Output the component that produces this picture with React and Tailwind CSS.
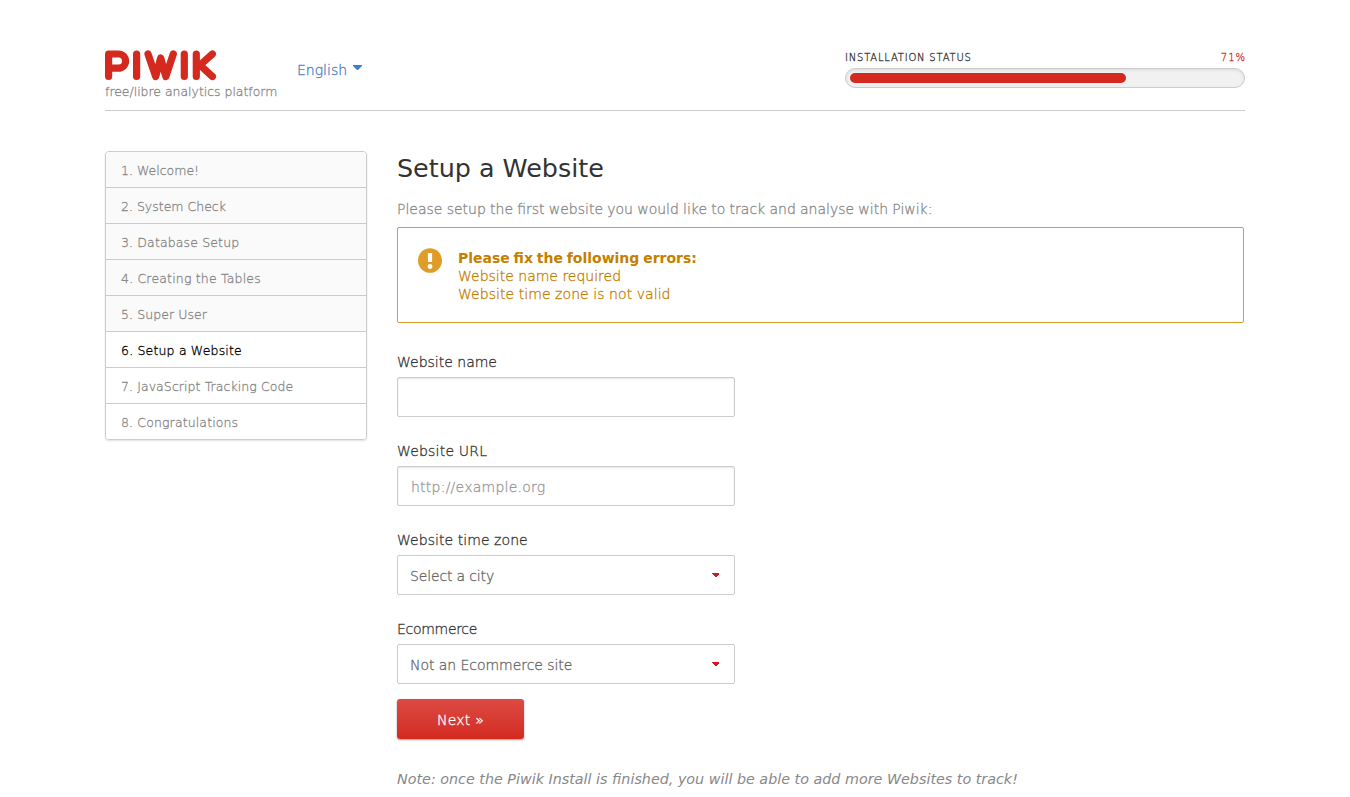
import React from "react";

const steps = [
  ["1. Welcome!", "tracking-normal"],
  ["2. System Check", "tracking-normal"],
  ["3. Database Setup", "tracking-[0.14px]"],
  ["4. Creating the Tables", "tracking-[0.18px]"],
  ["5. Super User", "tracking-[0.08px]"],
  ["6. Setup a Website", "tracking-[0.18px]"],
  ["7. JavaScript Tracking Code", "tracking-[0.08px]"],
  ["8. Congratulations", "tracking-[0.13px]"],
];

function stepClass(i) {
  if (i < 5) return "bg-[#fafafa] text-[#888]";
  if (i === 5) return "bg-white text-black";
  return "bg-white text-[#888]";
}

function Logo() {
  return (
    <svg
      className="block"
      width="112"
      height="31"
      viewBox="0 0 112 31"
      fill="none"
      stroke="#d4291f"
      strokeWidth="7.2"
      strokeLinecap="round"
      strokeLinejoin="round"
    >
      <path d="M3.6 26.5V4H13.5a7.1 7.1 0 0 1 0 14.2H4" />
      <path d="M31.6 4V26.5" />
      <path d="M43 4L50.7 26.5L55.7 8L60.8 26.5L68.3 4" />
      <path d="M79.3 4V26.5" />
      <path d="M91.3 4V26.5M107.4 4L95 15.2L107.4 26.5" />
    </svg>
  );
}

function Field({ label, tracking, children }) {
  return (
    <div className="mb-[25px]">
      <label className={"mb-[6px] block h-[18px] text-sm leading-[18px] text-[#333] " + tracking}>{label}</label>
      {children}
    </div>
  );
}

function Select({ value, tracking }) {
  return (
    <button className="flex h-10 w-[338px] items-center justify-between rounded-[2px] border border-[#ccc] bg-white pr-[15px] pl-3 text-sm text-[#666]">
      <span className={"pt-px " + tracking}>{value}</span>
      <svg className="mb-px block" width="7" height="4" viewBox="0 0 7 4" shapeRendering="crispEdges">
        <path d="M0 0H7V1L4 4H3L0 1Z" fill="#c91b20" />
      </svg>
    </button>
  );
}

export default function App() {
  return (
    <div className="h-[797px] overflow-hidden bg-white font-['DejaVu_Sans',sans-serif] font-extralight [-webkit-text-stroke-width:0.3px]">
      <div className="mx-auto w-[1140px]">
        <header className="flex h-[111px] items-start border-b border-[#ccc] pt-[50px]">
          <div className="w-[192px]">
            <Logo />
            <p className="mt-[1px] text-[12.45px] leading-[19px] whitespace-nowrap text-[#888]">free/libre analytics platform</p>
          </div>
          <div className="flex pt-[11px] text-sm leading-[18px] text-[#3f80c6]">
            English
            <svg className="mt-1 ml-[6px] block" width="9" height="5" viewBox="0 0 9 5">
              <path d="M0 0H9V1L5 5H4L0 1Z" fill="#3f80c6" />
            </svg>
          </div>
          <div className="ml-auto w-[400px]">
            <div className="flex h-[15px] justify-between text-[10px] leading-[15px] uppercase">
              <span className="tracking-[0.8px] text-[#333]">Installation status</span>
              <span className="-mr-px tracking-[1px] text-[#d4291f]">71%</span>
            </div>
            <div className="mt-[3px] h-5 rounded-[10px] border border-[#ccc] bg-[#f1f1f1] p-1 shadow-[inset_0_1px_3px_rgba(0,0,0,0.1)]">
              <div className="h-[10px] w-[276px] rounded-[5px] bg-[#d4291f]" />
            </div>
          </div>
        </header>

        <div className="flex pt-10">
          <ul className="h-[289px] w-[262px] shrink-0 overflow-hidden rounded-[4px] border border-[#ccc] text-[12.5px] shadow-[0_1px_2px_rgba(0,0,0,0.12)]">
            {steps.map(([s, tracking], i) => (
              <li key={s} className={"h-9 border-b border-[#ccc] pt-px pl-[15px] leading-9 " + tracking + " " + stepClass(i)}>
                {s}
              </li>
            ))}
          </ul>

          <main className="ml-[30px] w-[847px]">
            <h1 className="pt-[2px] text-[25.4px] leading-[30px] font-normal text-[#333] [-webkit-text-stroke-width:0]">Setup a Website</h1>
            <p className="mt-[17px] h-[18px] text-sm leading-[18px] text-[#888] [word-spacing:-0.23px]">
              Please setup the first website you would like to track and analyse with Piwik:
            </p>
            <div className="mt-[9px] flex h-24 rounded-[2px] border border-[#df9d27] pt-[21px] pl-5 text-sm leading-[18px] text-[#c47f00]">
              <svg className="-mt-px block shrink-0" width="24" height="25" viewBox="0 0 24 25">
                <ellipse cx="12" cy="12.5" rx="12" ry="12.3" fill="#df9d27" />
                <path d="M9.9 5H14.1V14H9.9Z" fill="#fff" />
                <circle cx="12" cy="18.5" r="2.4" fill="#fff" />
              </svg>
              <div className="ml-4">
                <strong className="block font-bold [word-spacing:-1.1px] [-webkit-text-stroke-width:0]">Please fix the following errors:</strong>
                <p>Website name required</p>
                <p className="tracking-[0.06px]">Website time zone is not valid</p>
              </div>
            </div>

            <form className="mt-[30px]">
              <Field label="Website name" tracking="tracking-normal">
                <input className="block h-10 w-[338px] rounded-[2px] border border-[#ccc] px-[13px] shadow-[inset_0_1px_2px_rgba(0,0,0,0.1)] outline-none" />
              </Field>
              <Field label="Website URL" tracking="tracking-[0.2px]">
                <input
                  placeholder="http://example.org"
                  className="block h-10 w-[338px] rounded-[2px] border border-[#ccc] px-[13px] pt-[2px] text-sm tracking-[0.24px] shadow-[inset_0_1px_2px_rgba(0,0,0,0.1)] outline-none placeholder:text-[#999]"
                />
              </Field>
              <Field label="Website time zone" tracking="tracking-[0.06px]">
                <Select value="Select a city" tracking="tracking-[-0.15px]" />
              </Field>
              <Field label="Ecommerce" tracking="tracking-[-0.3px]">
                <Select value="Not an Ecommerce site" tracking="tracking-[-0.05px]" />
              </Field>
            </form>
            <button className="-mt-[10px] block h-10 w-[127px] rounded-[3px] bg-linear-to-b from-[#db4a43] to-[#d4291f] pt-px text-sm tracking-[0.2px] text-white shadow-[0_1px_2px_rgba(0,0,0,0.4)]">
              Next »
            </button>
            <p className="mt-[31px] text-[14.32px] leading-[18px] text-[#888] italic [-webkit-text-stroke-width:0]">
              Note: once the Piwik Install is finished, you will be able to add more Websites to track!
            </p>
          </main>
        </div>
      </div>
    </div>
  );
}
